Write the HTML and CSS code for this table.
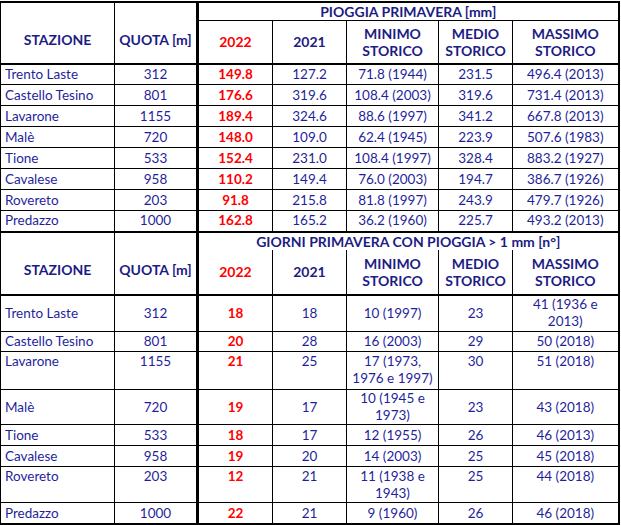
FILE: index.html
```html
<!DOCTYPE html>
<html lang="it">
<head>
<meta charset="utf-8">
<title>Pioggia primavera</title>
<link rel="stylesheet" href="styles.css">
</head>
<body>
<table class="grid">
  <colgroup>
    <col class="c-staz"><col class="c-quota"><col class="c-y22"><col class="c-y21"><col class="c-min"><col class="c-med"><col class="c-max">
  </colgroup>
  <tbody>
    <tr class="r-title">
      <th rowspan="2" class="h-side">STAZIONE</th>
      <th rowspan="2" class="h-side sep">QUOTA [m]</th>
      <th colspan="5" class="h-title">PIOGGIA PRIMAVERA [mm]</th>
    </tr>
    <tr class="r-head">
      <th class="red">2022</th>
      <th>2021</th>
      <th>MINIMO<br>STORICO</th>
      <th>MEDIO<br>STORICO</th>
      <th>MASSIMO<br>STORICO</th>
    </tr>
  </tbody>
  <tbody class="data">
    <tr><td class="name">Trento Laste</td><td class="sep">312</td><td class="red">149.8</td><td>127.2</td><td>71.8 (1944)</td><td>231.5</td><td>496.4 (2013)</td></tr>
    <tr><td class="name">Castello Tesino</td><td class="sep">801</td><td class="red">176.6</td><td>319.6</td><td>108.4 (2003)</td><td>319.6</td><td>731.4 (2013)</td></tr>
    <tr><td class="name">Lavarone</td><td class="sep">1155</td><td class="red">189.4</td><td>324.6</td><td>88.6 (1997)</td><td>341.2</td><td>667.8 (2013)</td></tr>
    <tr><td class="name">Malè</td><td class="sep">720</td><td class="red">148.0</td><td>109.0</td><td>62.4 (1945)</td><td>223.9</td><td>507.6 (1983)</td></tr>
    <tr><td class="name">Tione</td><td class="sep">533</td><td class="red">152.4</td><td>231.0</td><td>108.4 (1997)</td><td>328.4</td><td>883.2 (1927)</td></tr>
    <tr><td class="name">Cavalese</td><td class="sep">958</td><td class="red">110.2</td><td>149.4</td><td>76.0 (2003)</td><td>194.7</td><td>386.7 (1926)</td></tr>
    <tr><td class="name">Rovereto</td><td class="sep">203</td><td class="red">91.8</td><td>215.8</td><td>81.8 (1997)</td><td>243.9</td><td>479.7 (1926)</td></tr>
    <tr><td class="name">Predazzo</td><td class="sep">1000</td><td class="red">162.8</td><td>165.2</td><td>36.2 (1960)</td><td>225.7</td><td>493.2 (2013)</td></tr>
  </tbody>
  <tbody class="block2">
    <tr class="r-title2">
      <th rowspan="2" class="h-side">STAZIONE</th>
      <th rowspan="2" class="h-side sep">QUOTA [m]</th>
      <th colspan="5" class="h-title2">GIORNI PRIMAVERA CON PIOGGIA &gt; 1 mm [n°]</th>
    </tr>
    <tr class="r-head2">
      <th class="red">2022</th>
      <th>2021</th>
      <th>MINIMO<br>STORICO</th>
      <th>MEDIO<br>STORICO</th>
      <th>MASSIMO<br>STORICO</th>
    </tr>
  </tbody>
  <tbody class="data data2">
    <tr class="h37"><td class="name">Trento Laste</td><td class="sep">312</td><td class="red">18</td><td>18</td><td>10 (1997)</td><td>23</td><td>41 (1936 e<br>2013)</td></tr>
    <tr class="h20"><td class="name">Castello Tesino</td><td class="sep">801</td><td class="red">20</td><td>28</td><td>16 (2003)</td><td>29</td><td>50 (2018)</td></tr>
    <tr class="h38 top"><td class="name">Lavarone</td><td class="sep">1155</td><td class="red">21</td><td>25</td><td>17 (1973,<br>1976 e 1997)</td><td>30</td><td>51 (2018)</td></tr>
    <tr class="h35"><td class="name">Malè</td><td class="sep">720</td><td class="red">19</td><td>17</td><td>10 (1945 e<br>1973)</td><td>23</td><td>43 (2018)</td></tr>
    <tr class="h21"><td class="name">Tione</td><td class="sep">533</td><td class="red">18</td><td>17</td><td>12 (1955)</td><td>26</td><td>46 (2013)</td></tr>
    <tr class="h21"><td class="name">Cavalese</td><td class="sep">958</td><td class="red">19</td><td>20</td><td>14 (2003)</td><td>25</td><td>45 (2018)</td></tr>
    <tr class="h36 top"><td class="name">Rovereto</td><td class="sep">203</td><td class="red">12</td><td>21</td><td>11 (1938 e<br>1943)</td><td>25</td><td>44 (2018)</td></tr>
    <tr class="h22"><td class="name">Predazzo</td><td class="sep">1000</td><td class="red">22</td><td>21</td><td>9 (1960)</td><td>26</td><td>46 (2018)</td></tr>
  </tbody>
</table>
</body>
</html>
```

FILE: styles.css
```css
html, body {
  margin: 0;
  padding: 0;
  background: #ffffff;
}

body {
  font-family: "Lato", "Liberation Sans", sans-serif;
  font-size: 13.5px;
  color: #1f1f9c;
}

.grid {
  border-collapse: collapse;
  table-layout: fixed;
  width: 619px;
  margin: 1px 0 0 0;
  border-top: 2px solid #000;
  border-right: 2px solid #000;
  border-bottom: 3px solid #000;
  border-left: 1px solid #000;
}

.c-staz { width: 114px; }
.c-quota { width: 83px; }
.c-y22 { width: 75px; }
.c-y21 { width: 74px; }
.c-min { width: 92px; }
.c-med { width: 74px; }
.c-max { width: 106px; }

.grid th,
.grid td {
  border: 1px solid #000;
  padding: 0;
  line-height: 17px;
  text-align: center;
  vertical-align: middle;
  white-space: nowrap;
}

.grid th {
  font-weight: 700;
  font-size: 14px;
  color: #1c1c84;
}

.grid .sep {
  border-right: 3px solid #000;
}

.h-side {
  padding-top: 13px !important;
}

.r-title { height: 18px; }
.r-head { height: 43px; }
.r-title2 { height: 18px; }
.r-head2 { height: 45px; }

.h-title2 {
  border-bottom: none !important;
}
.r-head2 th {
  border-top: none;
}

.r-head th,
.r-head2 th {
  border-bottom: 2px solid #000;
}
.r-title .h-side,
.r-title2 .h-side {
  border-bottom: 2px solid #000;
}

.block2 tr:first-child th {
  border-top: 2px solid #000;
}

.data tr { height: 21px; }

.grid td.name {
  text-align: left;
  padding-left: 4px;
}

.grid .red {
  color: #ff0000;
  font-weight: 700;
}

.data2 .h37 { height: 37px; }
.data2 .h20 { height: 20px; }
.data2 .h38 { height: 38px; }
.data2 .h35 { height: 35px; }
.data2 .h21 { height: 21px; }
.data2 .h36 { height: 36px; }
.data2 .h22 { height: 22px; }

.data2 tr.top td {
  vertical-align: top;
  padding-top: 1px;
}
```
